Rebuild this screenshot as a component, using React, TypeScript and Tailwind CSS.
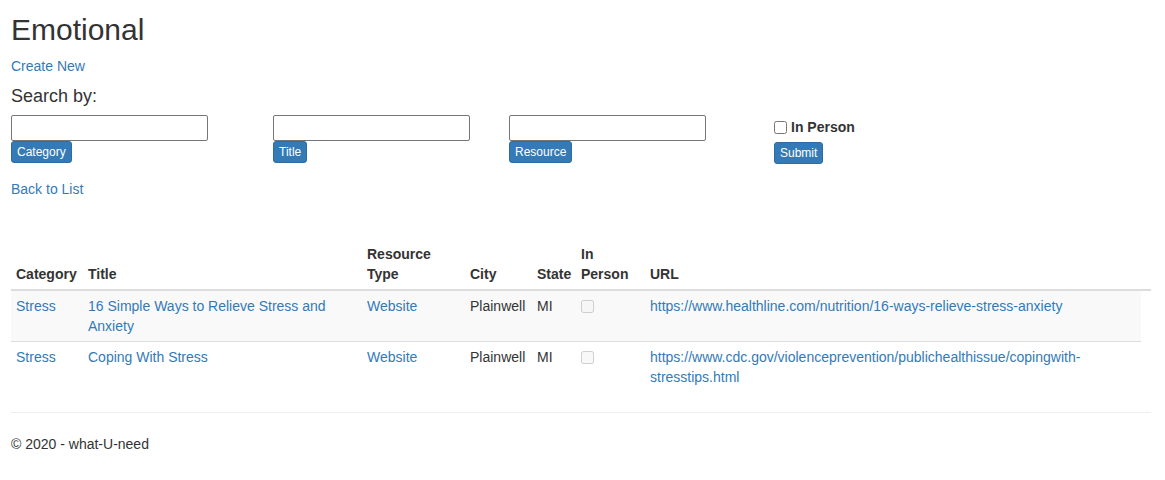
import React from 'react';

// rows shown in the Emotional list
const rows = [
	{
		category: 'Stress',
		title: '16 Simple Ways to Relieve Stress and Anxiety',
		type: 'Website',
		city: 'Plainwell',
		state: 'MI',
		url: 'https://www.healthline.com/nutrition/16-ways-relieve-stress-anxiety',
	},
	{
		category: 'Stress',
		title: 'Coping With Stress',
		type: 'Website',
		city: 'Plainwell',
		state: 'MI',
		url: 'https://www.cdc.gov/violenceprevention/publichealthissue/copingwith-stresstips.html',
	},
];

function SearchField({ label, width }: { label: string; width: string }) {
	return (
		<div className={`flex flex-col items-start ${width}`}>
			<input
				type="text"
				className="h-[26px] w-[197px] rounded-[2px] border border-[#767676] bg-white px-[2px] text-sm"
			/>
			<label className="rounded-[3px] border border-[#2e6da4] bg-[#337ab7] px-[5px] py-px text-xs leading-[18px] text-white">
				{label}
			</label>
		</div>
	);
}

export default function App() {
	const th = 'border-b-2 border-[#ddd] p-[5px] text-left align-bottom font-bold';
	const td = 'border-t border-[#ddd] p-[5px] align-top';

	return (
		<div className="w-[1162px] bg-white px-[11px] font-['Liberation_Sans',Arial,sans-serif] text-sm leading-5 text-[#333]">
			<h2 className="mt-[13px] mb-[10px] text-[30px] leading-[33px] font-normal">Emotional</h2>
			<p className="mb-[10px]">
				<a href="#" className="text-[#337ab7]">
					Create New
				</a>
			</p>
			<h4 className="mt-0 mb-[9px] text-[18px] leading-5 font-normal">Search by:</h4>

			<div className="flex items-start">
				<SearchField label="Category" width="w-[262px]" />
				<SearchField label="Title" width="w-[236px]" />
				<SearchField label="Resource" width="w-[265px]" />
				<div className="flex flex-col items-start pt-[2px]">
					<label className="mb-[5px] flex items-start font-bold">
						<input type="checkbox" className="mt-1 mr-1 h-[13px] w-[13px]" />
						In Person
					</label>
					<button className="rounded-[3px] border border-[#2e6da4] bg-[#337ab7] px-[5px] py-px text-xs leading-[18px] text-white">
						Submit
					</button>
				</div>
			</div>

			<p className="mt-[15px] mb-[40px]">
				<a href="#" className="text-[#337ab7]">
					Back to List
				</a>
			</p>

			<table className="mb-5 w-[1140px] table-fixed">
				<colgroup>
					<col className="w-[72px]" />
					<col className="w-[279px]" />
					<col className="w-[103px]" />
					<col className="w-[67px]" />
					<col className="w-[44px]" />
					<col className="w-[69px]" />
					<col className="w-[496px]" />
					<col className="w-[10px]" />
				</colgroup>
				<thead>
					<tr>
						<th className={th}>Category</th>
						<th className={th}>Title</th>
						<th className={th}>Resource Type</th>
						<th className={th}>City</th>
						<th className={th}>State</th>
						<th className={th}>In Person</th>
						<th className={th}>URL</th>
						<th className={th}></th>
					</tr>
				</thead>
				<tbody>
					{rows.map((r, i) => (
						<tr key={i} className={i % 2 === 0 ? 'bg-[#f9f9f9]' : ''}>
							<td className={td}>
								<a href="#" className="text-[#337ab7]">
									{r.category}
								</a>
							</td>
							<td className={td}>
								<a href="#" className="text-[#337ab7]">
									{r.title}
								</a>
							</td>
							<td className={td}>
								<a href="#" className="text-[#337ab7]">
									{r.type}
								</a>
							</td>
							<td className={td}>{r.city}</td>
							<td className={td}>{r.state}</td>
							<td className={td}>
								<input type="checkbox" disabled className="mt-1 h-[13px] w-[13px]" />
							</td>
							<td className={td}>
								<a href="#" className="text-[#337ab7]">
									{r.url}
								</a>
							</td>
						</tr>
					))}
				</tbody>
			</table>

			<hr className="border-t border-[#eee]" />
			<footer className="mt-[21px] pb-7">
				<p>© 2020 - what-U-need</p>
			</footer>
		</div>
	);
}
